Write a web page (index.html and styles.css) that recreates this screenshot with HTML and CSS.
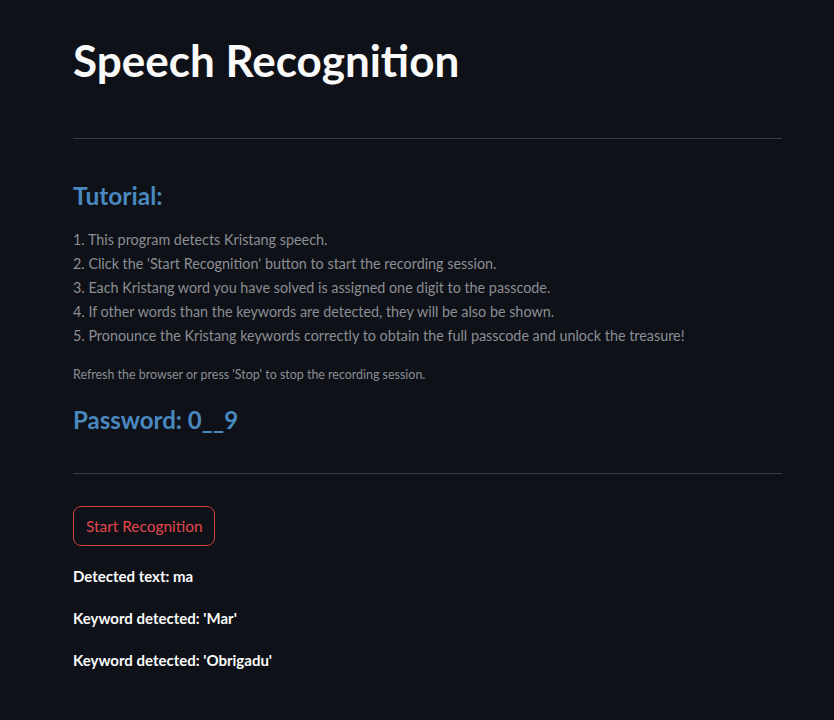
FILE: index.html
```html
<!DOCTYPE html>
<html>
<head>
<meta charset="utf-8">
<link rel="stylesheet" href="styles.css">
</head>
<body>
<main class="main">
  <h1 class="title">Speech Recognition</h1>
  <hr class="divider">
  <h3 class="section">Tutorial:</h3>
  <div class="steps">
    <p>1. This program detects Kristang speech.</p>
    <p>2. Click the 'Start Recognition' button to start the recording session.</p>
    <p>3. Each Kristang word you have solved is assigned one digit to the passcode.</p>
    <p>4. If other words than the keywords are detected, they will be also be shown.</p>
    <p>5. Pronounce the Kristang keywords correctly to obtain the full passcode and unlock the treasure!</p>
  </div>
  <p class="note">Refresh the browser or press 'Stop' to stop the recording session.</p>
  <h3 class="section password">Password: 0__9</h3>
  <hr class="divider second">
  <button class="btn">Start Recognition</button>
  <p class="result first">Detected text: ma</p>
  <p class="result">Keyword detected: 'Mar'</p>
  <p class="result">Keyword detected: 'Obrigadu'</p>
</main>
</body>
</html>
```
FILE: styles.css
```css
html, body {
  margin: 0;
  padding: 0;
  background: #0e1117;
}
body {
  font-family: "Lato", "Noto Sans", sans-serif;
  color: #fafafa;
  width: 834px;
  height: 720px;
  overflow: hidden;
}
.main {
  padding: 0 52px 0 73px;
  display: flex;
  flex-direction: column;
  align-items: flex-start;
}
.title {
  margin: 34px 0 0;
  font-size: 44px;
  font-weight: 700;
  line-height: 52px;
  color: #fafafa;
}
.divider {
  align-self: stretch;
  margin: 52px 0 0;
  border: 0;
  height: 1px;
  background: #3a3d45;
}
.section {
  margin: 42px 0 0;
  font-size: 24.5px;
  font-weight: 700;
  line-height: 30px;
  color: #4a88c0;
}
.steps {
  margin-top: 17px;
}
.steps p {
  margin: 0;
  font-size: 14.35px;
  line-height: 24px;
  color: #8c8e94;
}
.note {
  margin: 17px 0 0;
  font-size: 12.45px;
  line-height: 20px;
  color: #8c8e94;
}
.password {
  margin-top: 20px;
  font-size: 24px;
}
.second {
  margin-top: 38px;
}
.btn {
  margin-top: 32px;
  height: 40px;
  padding: 0 12px;
  border: 1px solid #d2403f;
  border-radius: 8px;
  background: #0e1117;
  color: #e0484b;
  font-family: inherit;
  font-size: 15.4px;
}
.result {
  margin: 0;
  font-size: 15px;
  font-weight: 700;
  line-height: 20px;
  color: #fafafa;
}
.result.first {
  margin-top: 20px;
}
.result + .result {
  margin-top: 22px;
}
```
